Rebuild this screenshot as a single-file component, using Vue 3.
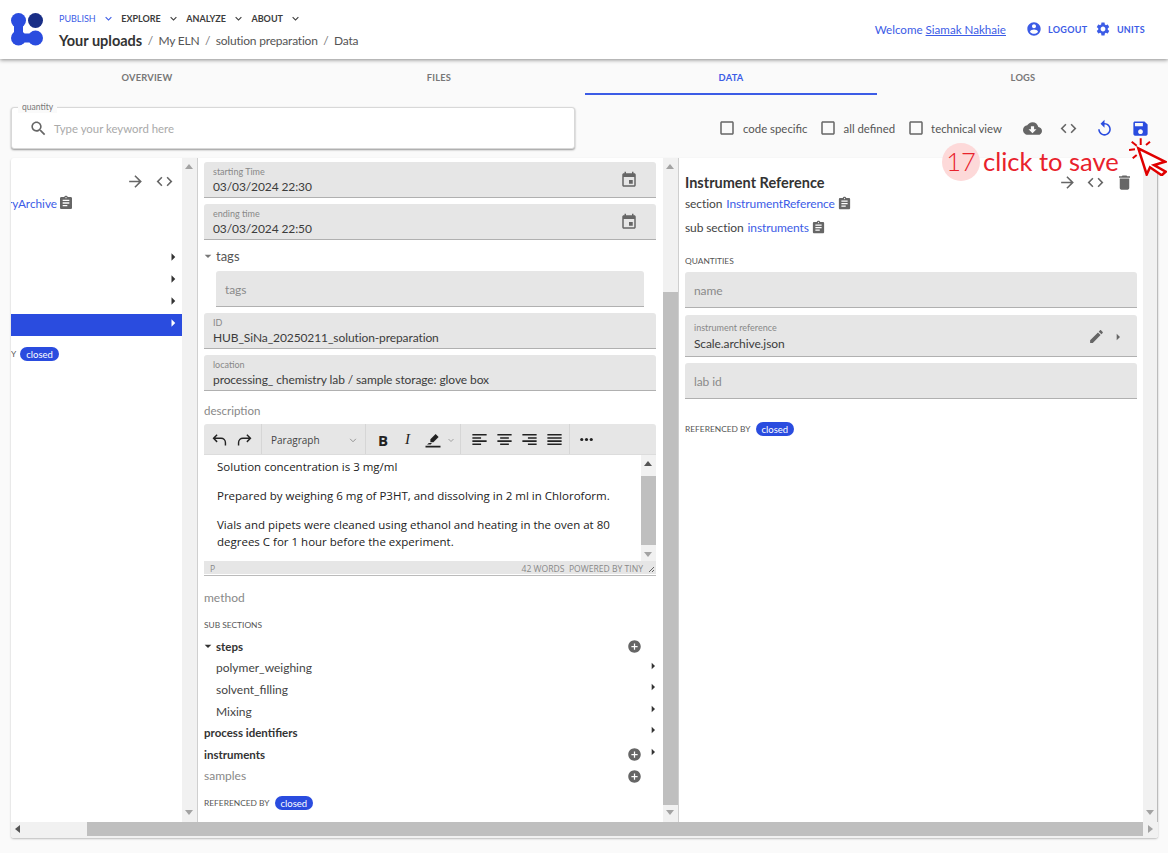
<script setup>
const icons = {
  expand: 'M16.59 8.59L12 13.17 7.41 8.59 6 10l6 6 6-6z',
  account: 'M12 2C6.48 2 2 6.48 2 12s4.48 10 10 10 10-4.48 10-10S17.52 2 12 2zm0 3c1.66 0 3 1.34 3 3s-1.34 3-3 3-3-1.34-3-3 1.34-3 3-3zm0 14.2c-2.5 0-4.71-1.28-6-3.22.03-1.99 4-3.08 6-3.08 1.99 0 5.97 1.09 6 3.08-1.29 1.94-3.5 3.22-6 3.22z',
  gear: 'M19.14 12.94c.04-.3.06-.61.06-.94 0-.32-.02-.64-.07-.94l2.03-1.58c.18-.14.23-.41.12-.61l-1.92-3.32c-.12-.22-.37-.29-.59-.22l-2.39.96c-.5-.38-1.03-.7-1.62-.94l-.36-2.54c-.04-.24-.24-.41-.48-.41h-3.84c-.24 0-.43.17-.47.41l-.36 2.54c-.59.24-1.13.57-1.62.94l-2.39-.96c-.22-.08-.47 0-.59.22L2.74 8.87c-.12.21-.08.47.12.61l2.03 1.58c-.05.3-.09.63-.09.94s.02.64.07.94l-2.03 1.58c-.18.14-.23.41-.12.61l1.92 3.32c.12.22.37.29.59.22l2.39-.96c.5.38 1.03.7 1.62.94l.36 2.54c.05.24.24.41.48.41h3.84c.24 0 .44-.17.47-.41l.36-2.54c.59-.24 1.13-.56 1.62-.94l2.39.96c.22.08.47 0 .59-.22l1.92-3.32c.12-.22.07-.47-.12-.61l-2.01-1.58zM12 15.6c-1.98 0-3.6-1.62-3.6-3.6s1.62-3.6 3.6-3.6 3.6 1.62 3.6 3.6-1.62 3.6-3.6 3.6z',
  search: 'M15.5 14h-.79l-.28-.27C15.41 12.59 16 11.11 16 9.5 16 5.91 13.09 3 9.5 3S3 5.91 3 9.5 5.91 16 9.5 16c1.61 0 3.09-.59 4.23-1.57l.27.28v.79l5 4.99L20.49 19l-4.99-5zm-6 0C7.01 14 5 11.99 5 9.5S7.01 5 9.5 5 14 7.01 14 9.5 11.99 14 9.5 14z',
  cloud: 'M19.35 10.04C18.67 6.59 15.64 4 12 4 9.11 4 6.6 5.64 5.35 8.04 2.34 8.36 0 10.91 0 14c0 3.31 2.69 6 6 6h13c2.76 0 5-2.24 5-5 0-2.64-2.05-4.78-4.65-4.96zM17 13l-5 5-5-5h3V9h4v4h3z',
  code: 'M9.4 16.6L4.8 12l4.6-4.6L8 6l-6 6 6 6 1.4-1.4zm5.2 0l4.6-4.6-4.6-4.6L16 6l6 6-6 6-1.4-1.4z',
  replay: 'M12 5V1L7 6l5 5V7c3.31 0 6 2.69 6 6s-2.69 6-6 6-6-2.69-6-6H4c0 4.42 3.58 8 8 8s8-3.58 8-8-3.58-8-8-8z',
  save: 'M17 3H5c-1.11 0-2 .9-2 2v14c0 1.1.89 2 2 2h14c1.1 0 2-.9 2-2V7l-4-4zm-5 16c-1.66 0-3-1.34-3-3s1.34-3 3-3 3 1.34 3 3-1.34 3-3 3zm3-10H5V5h10v4z',
  forward: 'M12 4l-1.41 1.41L16.17 11H4v2h12.17l-5.58 5.59L12 20l8-8z',
  trash: 'M6 19c0 1.1.9 2 2 2h8c1.1 0 2-.9 2-2V7H6v12zM19 4h-3.5l-1-1h-5l-1 1H5v2h14V4z',
  clip: 'M19 3h-4.18C14.4 1.84 13.3 1 12 1c-1.3 0-2.4.84-2.82 2H5c-1.1 0-2 .9-2 2v14c0 1.1.9 2 2 2h14c1.1 0 2-.9 2-2V5c0-1.1-.9-2-2-2zm-7 0c.55 0 1 .45 1 1s-.45 1-1 1-1-.45-1-1 .45-1 1-1zm2 14H7v-2h7v2zm3-4H7v-2h10v2zm0-4H7V7h10v2z',
  event: 'M17 12h-5v5h5v-5zM16 1v2H8V1H6v2H5c-1.11 0-1.99.9-1.99 2L3 19c0 1.1.89 2 2 2h14c1.1 0 2-.9 2-2V5c0-1.1-.9-2-2-2h-1V1h-2zm3 18H5V8h14v11z',
  edit: 'M3 17.25V21h3.75L17.81 9.94l-3.75-3.75L3 17.25zM20.71 7.04c.39-.39.39-1.02 0-1.41l-2.34-2.34c-.39-.39-1.02-.39-1.41 0l-1.83 1.83 3.75 3.75 1.83-1.83z',
  add: 'M12 2C6.48 2 2 6.48 2 12s4.48 10 10 10 10-4.48 10-10S17.52 2 12 2zm5 11h-4v4h-2v-4H7v-2h4V7h2v4h4v2z',
  right: 'M10 17l5-5-5-5v10z',
  down: 'M7 10l5 5 5-5z',
  box: 'M19 5v14H5V5h14m0-2H5c-1.1 0-2 .9-2 2v14c0 1.1.9 2 2 2h14c1.1 0 2-.9 2-2V5c0-1.1-.9-2-2-2z',
}

const navItems = ['PUBLISH', 'EXPLORE', 'ANALYZE', 'ABOUT']
const tabs = ['OVERVIEW', 'FILES', 'DATA', 'LOGS']
const checks = ['code specific', 'all defined', 'technical view']
const leftRows = [false, false, false, true]
const steps = ['polymer_weighing', 'solvent_filling', 'Mixing']
</script>

<template>
  <div class="page">
    <header class="topbar">
      <svg class="logo" viewBox="0 0 32 33">
        <path class="logo-blue" d="M7.5 7.5V25H24.5" />
        <circle class="logo-fill" cx="7.5" cy="7.5" r="7.5" />
        <circle class="logo-fill" cx="7.5" cy="25" r="7.5" />
        <circle class="logo-fill" cx="24.5" cy="25" r="7.5" />
        <circle class="logo-dark" cx="24.5" cy="7.5" r="7.5" />
      </svg>
      <div class="head-mid">
        <nav class="nav">
          <span v-for="(n, i) in navItems" :key="n" class="nav-item" :class="{ on: i === 0 }">
            {{ n }}
            <svg viewBox="0 0 24 24"><path :d="icons.expand" /></svg>
          </span>
        </nav>
        <div class="crumbs">
          <b>Your uploads</b><i>/</i><span>My ELN</span><i>/</i><span>solution preparation</span><i>/</i><span>Data</span>
        </div>
      </div>
      <div class="head-right">
        <span class="welcome">Welcome <u>Siamak Nakhaie</u></span>
        <svg class="ic-15 user" viewBox="0 0 24 24"><path :d="icons.account" /></svg>
        <span class="head-btn">LOGOUT</span>
        <svg class="ic-15 cog" viewBox="0 0 24 24"><path :d="icons.gear" /></svg>
        <span class="head-btn">UNITS</span>
      </div>
    </header>

    <div class="tabs">
      <div v-for="t in tabs" :key="t" class="tab" :class="{ on: t === 'DATA' }">{{ t }}</div>
    </div>

    <div class="toolbar">
      <div class="search">
        <span class="search-label">quantity</span>
        <svg viewBox="0 0 24 24"><path :d="icons.search" /></svg>
        <span class="placeholder">Type your keyword here</span>
      </div>
      <div class="tools">
        <label v-for="c in checks" :key="c" class="check">
          <svg viewBox="0 0 24 24"><path :d="icons.box" /></svg>{{ c }}
        </label>
        <svg class="tool cloud" viewBox="0 0 24 24"><path :d="icons.cloud" /></svg>
        <svg class="tool" viewBox="0 0 24 24"><path :d="icons.code" /></svg>
        <svg class="tool blue" viewBox="0 0 24 24"><path :d="icons.replay" /></svg>
        <svg class="tool blue" viewBox="0 0 24 24"><path :d="icons.save" /></svg>
      </div>
    </div>

    <main class="card">
      <div class="columns">
        <section class="pane pane-left">
          <div class="left-actions">
            <svg viewBox="0 0 24 24"><path :d="icons.forward" /></svg>
            <svg viewBox="0 0 24 24"><path :d="icons.code" /></svg>
          </div>
          <div class="left-link">
            <span class="link">ryArchive</span>
            <svg viewBox="0 0 24 24"><path :d="icons.clip" /></svg>
          </div>
          <div class="left-rows">
            <div v-for="(sel, i) in leftRows" :key="i" class="left-row" :class="{ sel }">
              <svg viewBox="0 0 24 24"><path :d="icons.right" /></svg>
            </div>
          </div>
          <div class="left-ref"><span class="caption">Y</span><span class="chip">closed</span></div>
        </section>
        <div class="vbar">
          <span class="arrow-up"></span><span class="arrow-down"></span>
        </div>

        <section class="pane pane-mid">
          <div class="field">
            <small>starting Time</small><span>03/03/2024 22:30</span>
            <svg class="field-ic" viewBox="0 0 24 24"><path :d="icons.event" /></svg>
          </div>
          <div class="field">
            <small>ending time</small><span>03/03/2024 22:50</span>
            <svg class="field-ic" viewBox="0 0 24 24"><path :d="icons.event" /></svg>
          </div>
          <div class="tags-head">
            <svg viewBox="0 0 24 24"><path :d="icons.down" /></svg>tags
          </div>
          <div class="field empty tags-field">tags</div>
          <div class="field"><small>ID</small><span>HUB_SiNa_20250211_solution-preparation</span></div>
          <div class="field"><small>location</small><span>processing_ chemistry lab / sample storage: glove box</span></div>
          <div class="desc-label">description</div>

          <div class="editor">
            <div class="ed-bar">
              <div class="ed-group ed-history">
                <svg viewBox="0 0 24 24"><path class="st" d="M9 6L4.500 10.500 9 15M4.500 10.500H14a5.500 5.500 0 0 1 5.500 5.500v3.500" /></svg>
                <svg viewBox="0 0 24 24"><path class="st" d="M15 6l4.500 4.500L15 15M19.500 10.500H10A5.500 5.500 0 0 0 4.500 16v3.500" /></svg>
              </div>
              <div class="ed-group ed-para">
                <span>Paragraph</span>
                <svg viewBox="0 0 24 24"><path class="st thin" d="M7 10l5 5 5-5" /></svg>
              </div>
              <div class="ed-group ed-marks">
                <b>B</b><em>I</em>
                <svg viewBox="0 0 24 24"><path d="M15.500 4l4 4-7 7H8.500v-4zM6.500 16h4l-1.500 2H4zM2 19.500h20V22H2z" /></svg>
                <svg class="small" viewBox="0 0 24 24"><path class="st thin" d="M7 10l5 5 5-5" /></svg>
              </div>
              <div class="ed-group ed-align">
                <svg viewBox="0 0 24 24"><path d="M3 5h18v2H3zM3 9h11v2H3zM3 13h18v2H3zM3 17h11v2H3z" /></svg>
                <svg viewBox="0 0 24 24"><path d="M3 5h18v2H3zM6.500 9h11v2h-11zM3 13h18v2H3zM6.500 17h11v2h-11z" /></svg>
                <svg viewBox="0 0 24 24"><path d="M3 5h18v2H3zM10 9h11v2H10zM3 13h18v2H3zM10 17h11v2H10z" /></svg>
                <svg viewBox="0 0 24 24"><path d="M3 5h18v2H3zM3 9h18v2H3zM3 13h18v2H3zM3 17h18v2H3z" /></svg>
              </div>
              <div class="ed-group ed-more">
                <svg viewBox="0 0 24 24"><circle cx="6" cy="12" r="2" /><circle cx="12" cy="12" r="2" /><circle cx="18" cy="12" r="2" /></svg>
              </div>
            </div>
            <div class="ed-body">
              <div class="ed-text">
                <p>Solution concentration is 3 mg/ml</p>
                <p>Prepared by weighing 6 mg of P3HT, and dissolving in 2 ml in Chloroform.</p>
                <p>Vials and pipets were cleaned using ethanol and heating in the oven at 80 degrees C for 1 hour before the experiment.</p>
              </div>
              <div class="ed-scroll">
                <span class="arrow-up"></span><span class="ed-thumb"></span><span class="arrow-down"></span>
              </div>
            </div>
            <div class="ed-status">
              <span>P</span>
              <span class="ed-count">42 WORDS &nbsp;POWERED BY TINY</span>
              <svg viewBox="0 0 8 8"><path d="M7 2L2 7M7 5L5 7" /></svg>
            </div>
          </div>

          <div class="method">method</div>
          <div class="caption sub-caption">SUB SECTIONS</div>

          <div class="tree">
            <div class="tree-row strong">
              <svg class="caret" viewBox="0 0 24 24"><path :d="icons.down" /></svg>steps
              <svg class="plus" viewBox="0 0 24 24"><path :d="icons.add" /></svg>
            </div>
            <div v-for="s in steps" :key="s" class="tree-row child">
              {{ s }}
              <svg class="more" viewBox="0 0 24 24"><path :d="icons.right" /></svg>
            </div>
            <div class="tree-row strong">
              process identifiers
              <svg class="more" viewBox="0 0 24 24"><path :d="icons.right" /></svg>
            </div>
            <div class="tree-row strong">
              instruments
              <svg class="plus" viewBox="0 0 24 24"><path :d="icons.add" /></svg>
              <svg class="more" viewBox="0 0 24 24"><path :d="icons.right" /></svg>
            </div>
            <div class="tree-row muted">
              samples
              <svg class="plus" viewBox="0 0 24 24"><path :d="icons.add" /></svg>
            </div>
          </div>
          <div class="ref-line mid-ref"><span class="caption">REFERENCED BY</span><span class="chip">closed</span></div>
        </section>
        <div class="vbar thumbed">
          <span class="arrow-up"></span><span class="thumb"></span><span class="arrow-down"></span>
        </div>

        <section class="pane pane-right">
          <div class="title-row">
            <h2>Instrument Reference</h2>
            <svg viewBox="0 0 24 24"><path :d="icons.forward" /></svg>
            <svg viewBox="0 0 24 24"><path :d="icons.code" /></svg>
            <svg viewBox="0 0 24 24"><path :d="icons.trash" /></svg>
          </div>
          <div class="meta">section <span class="link">InstrumentReference</span>
            <svg viewBox="0 0 24 24"><path :d="icons.clip" /></svg>
          </div>
          <div class="meta second">sub section <span class="link">instruments</span>
            <svg viewBox="0 0 24 24"><path :d="icons.clip" /></svg>
          </div>
          <div class="caption quant">QUANTITIES</div>
          <div class="field empty">name</div>
          <div class="field ref-field">
            <small>instrument reference</small><span>Scale.archive.json</span>
            <svg class="field-edit" viewBox="0 0 24 24"><path :d="icons.edit" /></svg>
            <svg class="field-go" viewBox="0 0 24 24"><path :d="icons.right" /></svg>
          </div>
          <div class="field empty">lab id</div>
          <div class="ref-line right-ref"><span class="caption">REFERENCED BY</span><span class="chip">closed</span></div>
        </section>
        <div class="vbar last">
          <span class="arrow-up"></span><span class="arrow-down"></span>
        </div>
      </div>
      <div class="hbar">
        <span class="arrow-left"></span>
        <span class="hthumb"></span>
        <span class="arrow-right"></span>
      </div>
    </main>

    <!-- tutorial overlay drawn on top of the page -->
    <div class="hint">
      <span class="hint-num">17</span>
      <span class="hint-text">click to save</span>
    </div>
    <svg class="pointer" viewBox="0 0 38 38">
      <path class="ptr-body" d="M9.300 10.300L36 23.700 25 27 36.700 33.700 32.700 37.300 21 29.300 17.700 36.500z" />
      <path class="ptr-rays" d="M11.700.3V7M2.700 3.700L7.700 7.700M21 3.700L17 7M0 12L6 11.300M3.700 20.300L7.700 17" />
    </svg>
  </div>
</template>

<style scoped>
.page {
  position: relative;
  width: 1168px;
  height: 853px;
  overflow: hidden;
  background: #fafafa;
  color: #3c3c3c;
  font-family: Lato, "Noto Sans", sans-serif;
  font-size: 12px;
}
svg {
  fill: currentColor;
  flex: none;
}

/* header */
.topbar {
  position: relative;
  display: flex;
  align-items: flex-start;
  height: 59px;
  background: #fff;
  box-shadow: 0 1px 4px rgba(0, 0, 0, 0.45);
}
.logo {
  width: 32px;
  height: 33px;
  margin: 13px 16px 0 11px;
}
.logo-blue {
  fill: none;
  stroke: #2a4cdf;
  stroke-width: 9;
}
.logo-fill {
  fill: #2a4cdf;
}
.logo-dark {
  fill: #192e86;
}
.nav {
  display: flex;
  gap: 6.500px;
  height: 14px;
  margin-top: 11px;
}
.nav-item {
  display: flex;
  align-items: center;
  gap: 6px;
  font-size: 9px;
  font-weight: 700;
  color: #3c3c3c;
}
.nav-item svg {
  width: 13px;
  height: 13px;
}
.nav-item.on {
  color: #3c5ce6;
  font-size: 9px;
  font-weight: 400;
}
.crumbs {
  display: flex;
  align-items: center;
  height: 18px;
  margin-top: 6px;
  font-size: 12px;
  letter-spacing: -0.2px;
  color: #555;
}
.crumbs b {
  font-size: 14.500px;
  font-weight: 700;
  letter-spacing: 0;
  color: #333;
}
.crumbs i {
  font-style: normal;
  margin: 0 5.500px;
  color: #777;
}
.head-right {
  display: flex;
  align-items: center;
  margin-left: auto;
  height: 14px;
  margin-top: 22px;
  margin-right: 23px;
  color: #3c5ce6;
}
.welcome {
  font-size: 11.600px;
  margin-right: 20px;
}
.head-btn {
  font-size: 9px;
  font-weight: 700;
  letter-spacing: 0.3px;
}
.ic-15 {
  width: 16px;
  height: 16px;
}
.user {
  margin-right: 6px;
}
.cog {
  margin: 0 5.500px 0 8px;
}

/* tabs */
.tabs {
  display: grid;
  grid-template-columns: repeat(4, 292px);
  height: 36px;
  padding-left: 1px;
}
.tab {
  display: flex;
  align-items: center;
  justify-content: center;
  box-sizing: border-box;
  height: 36px;
  font-size: 9.300px;
  font-weight: 700;
  letter-spacing: 0.2px;
  color: #777;
}
.tab.on {
  color: #3c5ce6;
  border-bottom: 2px solid #3c5ce6;
  padding-top: 2px;
}

/* search + tools */
.toolbar {
  display: flex;
  align-items: center;
  height: 42px;
  margin-top: 12px;
  padding: 0 18px 0 11px;
}
.search {
  position: relative;
  display: flex;
  align-items: center;
  width: 564px;
  height: 42px;
  box-sizing: border-box;
  padding-left: 17px;
  background: #fff;
  border: 1px solid #d8d8d8;
  border-radius: 3px;
  box-shadow: 0 1px 2px rgba(0, 0, 0, 0.4);
  color: #666;
}
.search svg {
  width: 19px;
  height: 19px;
}
.search-label {
  position: absolute;
  left: 6px;
  top: -6px;
  padding: 0 4px;
  background: #fafafa;
  font-size: 8.500px;
  line-height: 11px;
  color: #777;
}
.placeholder {
  margin-left: 6px;
  font-size: 11.400px;
  color: #aaa;
}
.tools {
  display: flex;
  align-items: center;
  margin-left: auto;
}
.check {
  display: flex;
  align-items: center;
  gap: 6.500px;
  margin-right: 11.500px;
  font-size: 11.400px;
  color: #555;
}
.check svg {
  width: 18px;
  height: 18px;
  color: #666;
}
.tool {
  width: 19px;
  height: 19px;
  margin-left: 17px;
  color: #666;
}
.tool.cloud {
  margin-left: 9.500px;
}
.tool.blue {
  color: #2a4cdf;
}

/* main card */
.card {
  display: flex;
  flex-direction: column;
  width: 1147px;
  height: 680px;
  margin: 9px 0 0 11px;
  background: #fff;
  border-radius: 3px;
  box-shadow: 0 1px 2px rgba(0, 0, 0, 0.25);
  overflow: hidden;
}
.columns {
  display: flex;
  height: 664px;
}
.pane {
  box-sizing: border-box;
  height: 664px;
  overflow: hidden;
}
.vbar {
  position: relative;
  flex: none;
  width: 15px;
  background: #f1f1f1;
  border-right: 1px solid #cfcfcf;
}
.vbar.last {
  width: 14px;
  border-right: 1px solid #bbb;
}
.thumb {
  position: absolute;
  left: 0;
  top: 134px;
  width: 15px;
  height: 513px;
  background: #bfbfbf;
}
.arrow-up,
.arrow-down {
  position: absolute;
  left: 3px;
  width: 0;
  height: 0;
  border-left: 4px solid transparent;
  border-right: 4px solid transparent;
}
.arrow-up {
  top: 6px;
  border-bottom: 5px solid #a3a3a3;
}
.arrow-down {
  bottom: 7px;
  border-top: 5px solid #a3a3a3;
}
.hbar {
  position: relative;
  height: 16px;
  background: #f1f1f1;
}
.hthumb {
  position: absolute;
  left: 76px;
  top: 0;
  width: 1056px;
  height: 14px;
  background: #bfbfbf;
}
.arrow-left,
.arrow-right {
  position: absolute;
  top: 3px;
  width: 0;
  height: 0;
  border-top: 4px solid transparent;
  border-bottom: 4px solid transparent;
}
.arrow-left {
  left: 4px;
  border-right: 5px solid #555;
}
.arrow-right {
  right: 5px;
  border-left: 5px solid #a3a3a3;
}

/* left pane */
.pane-left {
  width: 171px;
}
.left-actions {
  display: flex;
  justify-content: flex-end;
  gap: 10px;
  height: 19px;
  margin-top: 14px;
  padding-right: 8px;
  color: #666;
}
.left-actions svg {
  width: 19px;
  height: 19px;
}
.left-link {
  display: flex;
  align-items: center;
  gap: 1px;
  height: 16px;
  margin-top: 4px;
  font-size: 11.800px;
}
.left-link .link {
  margin-left: -3px;
}
.left-link svg {
  width: 16px;
  height: 16px;
  color: #666;
}
.left-rows {
  margin-top: 37px;
}
.left-row {
  display: flex;
  justify-content: flex-end;
  height: 22px;
  color: #333;
}
.left-row svg {
  width: 18px;
  height: 18px;
}
.left-row.sel {
  background: #2a4cdf;
  color: #fff;
}
.left-ref {
  display: flex;
  align-items: center;
  gap: 4px;
  height: 14px;
  margin-top: 11px;
}
.caption {
  font-size: 8.400px;
  color: #555;
  white-space: nowrap;
}
.chip {
  display: inline-flex;
  align-items: center;
  height: 14px;
  padding: 0 6px;
  border-radius: 7px;
  background: #2a4cdf;
  color: #fff;
  font-size: 9.500px;
}
.link {
  color: #3c5ce6;
}

/* middle pane */
.pane-mid {
  width: 465px;
  padding: 4px 7px 0 6px;
}
.field {
  position: relative;
  display: flex;
  flex-direction: column;
  justify-content: flex-end;
  box-sizing: border-box;
  height: 36px;
  margin-bottom: 6px;
  padding: 0 9px 3px;
  background: #e6e6e6;
  border-bottom: 1px solid #b0b0b0;
  border-radius: 3px 3px 0 0;
  font-size: 12px;
  letter-spacing: -0.1px;
  line-height: 15px;
  color: #3c3c3c;
}
.field small {
  font-size: 9px;
  line-height: 14px;
  letter-spacing: 0;
  color: #888;
}
.field.empty {
  justify-content: center;
  padding-top: 2px;
  padding-bottom: 0;
  color: #8a8a8a;
}
.field-ic {
  position: absolute;
  right: 18px;
  top: 9px;
  width: 18px;
  height: 18px;
  color: #666;
}
.tags-head {
  display: flex;
  align-items: center;
  height: 16px;
  margin: 8px 0 7px;
  font-size: 13px;
  color: #555;
}
.tags-head svg {
  width: 16px;
  height: 16px;
  margin-left: -4px;
  color: #777;
}
.tags-field {
  margin: 0 12px 6px;
}
.desc-label {
  margin-top: 12px;
  margin-bottom: 5px;
  height: 16px;
  line-height: 16px;
  font-size: 11.500px;
  color: #888;
}

/* editor */
.editor {
  height: 151px;
  border-bottom: 1px solid #bbb;
  font-family: "Open Sans", "Noto Sans", sans-serif;
}
.ed-bar {
  display: flex;
  height: 31px;
  background: #e6e6e6;
  border-bottom: 1px solid #dcdcdc;
  border-radius: 3px 3px 0 0;
  box-sizing: border-box;
}
.ed-group {
  display: flex;
  align-items: center;
  padding-top: 1px;
  border-right: 1px solid #d6d6d6;
  color: #222;
}
.ed-group svg {
  width: 19px;
  height: 19px;
}
.st {
  fill: none;
  stroke: currentColor;
  stroke-width: 1.800;
}
.st.thin {
  stroke: #888;
  stroke-width: 1.500;
}
.ed-history {
  width: 58px;
  padding-left: 6px;
  gap: 6px;
  box-sizing: border-box;
}
.ed-para {
  width: 104px;
  padding-left: 9px;
  padding-right: 5px;
  box-sizing: border-box;
  justify-content: space-between;
  font-size: 10px;
  color: #444;
}
.ed-para svg {
  width: 14px;
  height: 14px;
}
.ed-marks {
  width: 95px;
  padding-left: 12px;
  box-sizing: border-box;
}
.ed-marks b {
  width: 27px;
  font-size: 15px;
}
.ed-marks em {
  width: 19px;
  font-family: "Liberation Serif", serif;
  font-size: 15px;
}
.ed-marks svg {
  width: 18px;
  height: 18px;
}
.ed-marks .small {
  width: 12px;
  height: 12px;
  margin-left: 3px;
}
.ed-align {
  width: 109px;
  padding-left: 8.500px;
  gap: 6px;
  box-sizing: border-box;
}
.ed-more {
  border-right: 0;
  padding-left: 7px;
}
.ed-body {
  display: flex;
  height: 106px;
  background: #fff;
}
.ed-text {
  flex: 1;
  padding: 0 16px 0 13px;
  font-size: 11.500px;
  line-height: 17px;
  color: #222;
}
.ed-text p {
  margin: 3px 0 12px;
}
.ed-text p + p {
  margin-top: 0;
}
.ed-scroll {
  position: relative;
  flex: none;
  width: 15px;
  background: #f1f1f1;
}
.ed-scroll .arrow-up {
  top: 6px;
  border-bottom-color: #555;
}
.ed-scroll .arrow-down {
  bottom: 4px;
}
.ed-thumb {
  position: absolute;
  top: 21px;
  left: 0;
  width: 15px;
  height: 69px;
  background: #bfbfbf;
}
.ed-status {
  display: flex;
  align-items: center;
  box-sizing: border-box;
  height: 13px;
  padding: 2px 1px 0 6px;
  background: #e6e6e6;
  font-size: 8.600px;
  color: #888;
}
.ed-count {
  margin-left: auto;
}
.ed-status svg {
  width: 8px;
  height: 8px;
  margin-left: 4px;
  fill: none;
  stroke: #666;
}

/* sub sections */
.method {
  height: 16px;
  line-height: 16px;
  margin-top: 14px;
  font-size: 12px;
  color: #888;
}
.sub-caption {
  height: 12px;
  line-height: 12px;
  margin-top: 13px;
}
.tree {
  margin-top: 5px;
}
.tree-row {
  position: relative;
  display: flex;
  align-items: center;
  box-sizing: border-box;
  height: 21.600px;
  padding-bottom: 1px;
  font-size: 12px;
  color: #444;
}
.tree-row.strong {
  font-size: 11.500px;
  font-weight: 700;
  color: #333;
}
.tree-row.child {
  padding-left: 12px;
}
.tree-row.muted {
  color: #888;
}
.caret {
  width: 16px;
  height: 16px;
  margin-left: -4px;
  color: #333;
}
.plus {
  position: absolute;
  right: 14.500px;
  top: 3px;
  width: 15px;
  height: 15px;
  color: #666;
}
.more {
  position: absolute;
  right: -5px;
  top: 0;
  width: 16px;
  height: 16px;
  color: #333;
}
.ref-line {
  display: flex;
  align-items: center;
  gap: 5px;
  height: 14px;
}
.mid-ref {
  margin-top: 9px;
}

/* right pane */
.pane-right {
  width: 464px;
  padding: 0 6px;
}
.title-row {
  display: flex;
  align-items: center;
  height: 18px;
  margin-top: 15px;
  color: #666;
}
.title-row h2 {
  margin: 0 auto 0 0;
  font-size: 14.500px;
  font-weight: 700;
  color: #333;
}
.title-row svg {
  width: 19px;
  height: 19px;
  margin-left: 9.500px;
}
.title-row svg:last-child {
  margin-right: 3.500px;
}
.meta {
  display: flex;
  align-items: center;
  gap: 4px;
  height: 16px;
  margin-top: 4px;
  font-size: 12px;
  letter-spacing: -0.1px;
  color: #444;
}
.meta.second {
  margin-top: 8px;
}
.meta svg {
  width: 15px;
  height: 15px;
  margin-left: -2px;
  color: #666;
}
.quant {
  margin-top: 20px;
  margin-bottom: 5px;
  height: 12px;
  line-height: 12px;
}
.ref-field {
  height: 42px;
  margin-top: 7px;
  padding-bottom: 5px;
}
.ref-field small {
  line-height: 16px;
}
.field-edit {
  position: absolute;
  right: 32.500px;
  top: 13px;
  width: 17px;
  height: 17px;
  color: #666;
}
.field-go {
  position: absolute;
  right: 11px;
  top: 14px;
  width: 16px;
  height: 16px;
  color: #666;
}
.right-ref {
  margin-top: 23px;
}

/* tutorial hint */
.hint {
  position: absolute;
  left: 942px;
  top: 143px;
  display: flex;
  align-items: center;
  gap: 3px;
  height: 38px;
  color: #e8222c;
  font-size: 25.500px;
}
.hint-num {
  display: flex;
  align-items: center;
  justify-content: center;
  width: 38px;
  height: 38px;
  padding-bottom: 2px;
  box-sizing: border-box;
  border-radius: 50%;
  background: #fdd9d9;
  font-weight: 300;
}
.hint-text {
  margin-top: -3px;
}
.pointer {
  position: absolute;
  left: 1129px;
  top: 138px;
  width: 38px;
  height: 38px;
  fill: none;
}
.ptr-body {
  fill: #fff;
  stroke: #e00000;
  stroke-width: 2.500;
}
.ptr-rays {
  stroke: #e00000;
  stroke-width: 2;
}
</style>

<style>
html,
body {
  overflow: hidden;
}
</style>
